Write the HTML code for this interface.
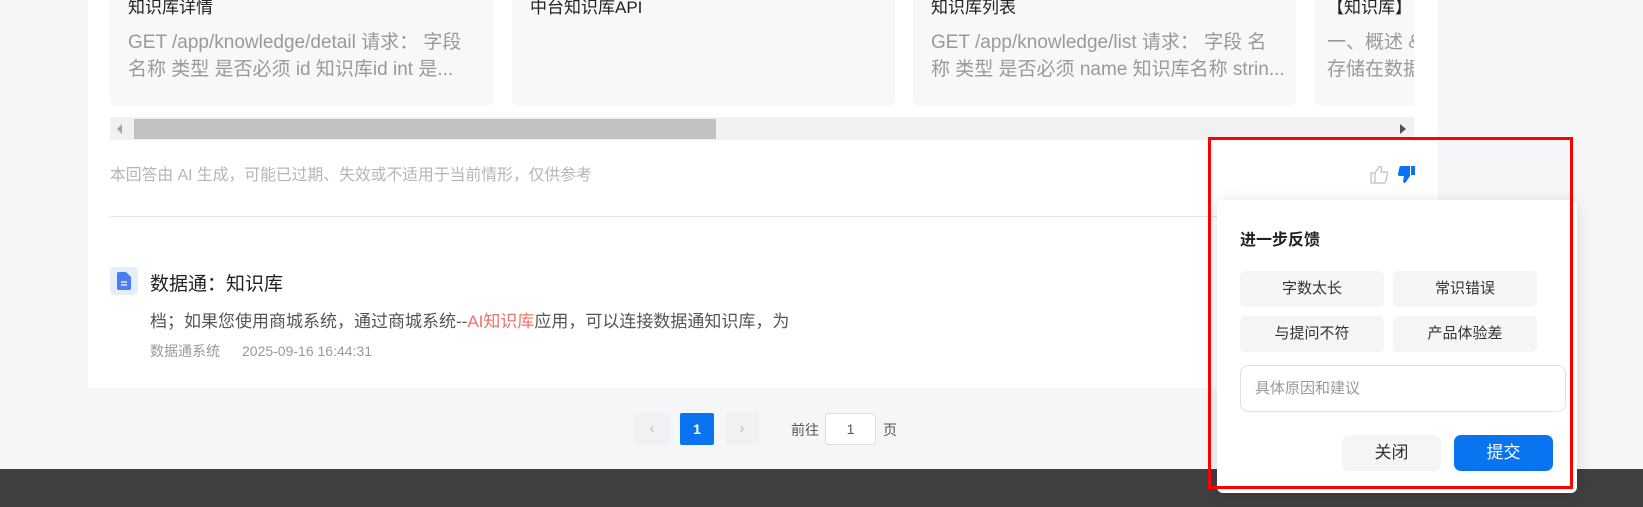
<!DOCTYPE html>
<html><head><meta charset="utf-8"><style>
*{margin:0;padding:0;box-sizing:border-box}
body{width:1643px;height:507px;overflow:hidden;background:#f5f6f8;font-family:"Liberation Sans","Noto Sans CJK SC",sans-serif;position:relative}
.abs{position:absolute}
.panel{left:88px;top:0;width:1350px;height:388px;background:#fff}
.card{top:0;height:106px;background:#f7f8fa;border-radius:0 0 6px 6px;overflow:hidden;padding:0 18px;white-space:nowrap}
.card .t{font-size:17px;color:#222;line-height:20px;margin-top:-2px}
.card .d{font-size:19px;color:#999;line-height:27px;margin-top:11px}
.tag{background:#f5f5f5;border-radius:5px;font-size:15px;color:#333;text-align:center;line-height:36px;width:144px;height:36px}
</style></head><body>
<div class="abs panel"></div>
<div class="abs" style="left:110px;top:0;width:1304px;height:106px;overflow:hidden">
 <div class="abs card" style="left:0;width:383px"><div class="t">知识库详情</div><div class="d">GET /app/knowledge/detail 请求： 字段<br>名称 类型 是否必须 id 知识库id int 是...</div></div>
 <div class="abs card" style="left:402px;width:383px"><div class="t">中台知识库API</div></div>
 <div class="abs card" style="left:803px;width:383px"><div class="t">知识库列表</div><div class="d">GET /app/knowledge/list 请求： 字段 名<br>称 类型 是否必须 name 知识库名称 strin...</div></div>
 <div class="abs card" style="left:1205px;width:383px;padding-left:12px"><div class="t">【知识库】</div><div class="d">一、概述 &amp;<br>存储在数据</div></div>
</div>
<div class="abs" style="left:110px;top:117px;width:1304px;height:23px;background:#f1f1f1"></div>
<div class="abs" style="left:134px;top:119px;width:582px;height:20px;background:#c1c1c1"></div>
<div class="abs" style="left:117px;top:124px;width:0;height:0;border:5px solid transparent;border-right:5px solid #a3a3a3;border-left:0"></div>
<div class="abs" style="left:1400px;top:124px;width:0;height:0;border:5px solid transparent;border-left:6px solid #505050;border-right:0"></div>
<div class="abs" style="left:110px;top:162px;font-size:15.8px;color:#b5b5b5">本回答由 AI 生成，可能已过期、失效或不适用于当前情形，仅供参考</div>
<svg class="abs" style="left:1370px;top:165px" width="18" height="19" viewBox="0 0 18 19"><path d="M1 8h4v10H1z M5 8l4-6c1-1 3 0 2.5 2L11 7h5c1 0 2 1 1.5 2l-2 8c-.3 1-1 1-2 1H5" fill="none" stroke="#b9bfc8" stroke-width="1.2"/></svg>
<svg class="abs" style="left:1397px;top:165px" width="18" height="19" viewBox="0 0 18 19"><path d="M14 1h4v9h-4z M13 1H4C3 1 2.5 2 2.3 3L1 9c-.2 1 .5 2 1.5 2H7l-1 5c0 2 2 2.5 3 1l4-6z" fill="#0a74f0"/></svg>
<div class="abs" style="left:110px;top:216px;width:1304px;height:1px;background:#e4e4e4"></div>
<div class="abs" style="left:110px;top:267px;width:28px;height:28px;background:#e6edfc;border-radius:4px"></div>
<svg class="abs" style="left:117px;top:272px" width="14" height="18" viewBox="0 0 14 18"><path d="M0 1.5C0 .7.7 0 1.5 0H9l5 5v11.5c0 .8-.7 1.5-1.5 1.5h-11C.7 18 0 17.3 0 16.5z" fill="#4a7ef5"/><path d="M4 10h6M4 13h6" stroke="#fff" stroke-width="1.3"/></svg>
<div class="abs" style="left:150px;top:269px;font-size:19px;color:#222">数据通：知识库</div>
<div class="abs" style="left:150px;top:307px;font-size:17px;color:#555">档；如果您使用商城系统，通过商城系统--<span style="color:#f0706a">AI知识库</span>应用，可以连接数据通知识库，为</div>
<div class="abs" style="left:150px;top:341px;font-size:14px;color:#999">数据通系统<span style="margin-left:22px">2025-09-16 16:44:31</span></div>
<div class="abs" style="left:635px;top:413px;width:34px;height:32px;background:#f0f1f3;border-radius:2px;color:#c0c4cc;text-align:center;line-height:31px;font-size:16px">‹</div>
<div class="abs" style="left:680px;top:413px;width:34px;height:32px;background:#0a74f0;border-radius:2px;color:#fff;text-align:center;line-height:32px;font-size:14px;font-weight:bold">1</div>
<div class="abs" style="left:725px;top:413px;width:34px;height:32px;background:#f0f1f3;border-radius:2px;color:#c0c4cc;text-align:center;line-height:31px;font-size:16px">›</div>
<div class="abs" style="left:791px;top:420px;font-size:14px;color:#555">前往</div>
<div class="abs" style="left:825px;top:413px;width:51px;height:32px;background:#fff;border:1px solid #dcdfe6;border-radius:4px;text-align:center;line-height:30px;font-size:14px;color:#555">1</div>
<div class="abs" style="left:883px;top:420px;font-size:14px;color:#555">页</div>
<div class="abs" style="left:0;top:469px;width:1643px;height:38px;background:#404040"></div>
<div class="abs" style="left:1217px;top:200px;width:360px;height:293px;background:#fff;border-radius:6px;box-shadow:0 2px 16px rgba(0,0,0,.12)"></div>
<div class="abs" style="left:1240px;top:226px;font-size:16px;font-weight:bold;color:#222">进一步反馈</div>
<div class="abs tag" style="left:1240px;top:271px">字数太长</div>
<div class="abs tag" style="left:1393px;top:271px">常识错误</div>
<div class="abs tag" style="left:1240px;top:316px">与提问不符</div>
<div class="abs tag" style="left:1393px;top:316px">产品体验差</div>
<div class="abs" style="left:1240px;top:365px;width:326px;height:47px;border:1px solid #e2e2e2;border-radius:8px;padding-left:14px;line-height:45px;font-size:15px;color:#999">具体原因和建议</div>
<div class="abs" style="left:1342px;top:435px;width:99px;height:36px;background:#f5f5f5;border-radius:7px;text-align:center;line-height:36px;font-size:17px;color:#333">关闭</div>
<div class="abs" style="left:1454px;top:435px;width:99px;height:36px;background:#0a74f0;border-radius:7px;text-align:center;line-height:36px;font-size:17px;color:#fff">提交</div>
<div class="abs" style="left:1208px;top:137px;width:365px;height:352px;border:3px solid #f00"></div>
</body></html>
